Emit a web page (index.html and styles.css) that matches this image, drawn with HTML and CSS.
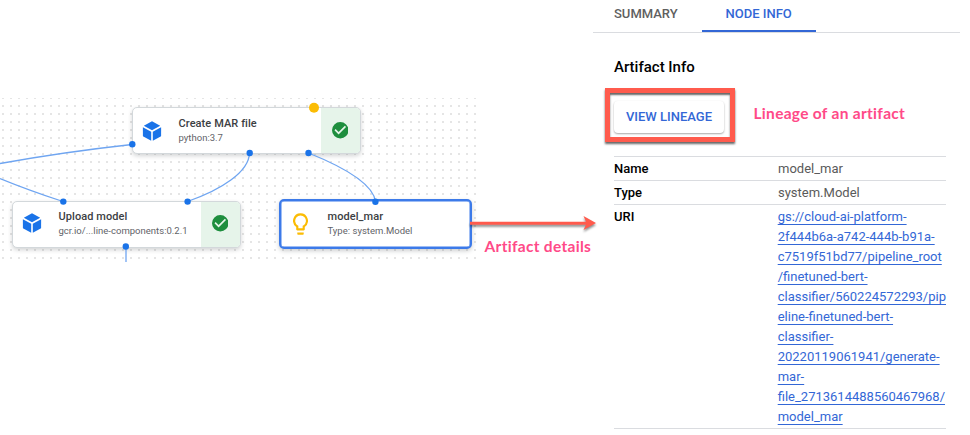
FILE: index.html
```html
<!DOCTYPE html>
<html lang="en">
<head>
<meta charset="utf-8">
<title>Pipeline artifact</title>
<link rel="stylesheet" href="styles.css">
</head>
<body>
<main class="stage">
  <div class="grid"></div>
  <section class="node create">
    <svg class="cube" viewBox="0 0 20 20"><path d="M10 .3 18.2 4.8 10 9.2 1.8 4.8Z"/><path d="M.9 6.2 9.2 10.7V19.8L.9 15.2Z"/><path d="M19.1 6.2 10.8 10.7V19.8L19.1 15.2Z"/></svg>
    <div class="label"><h3>Create MAR file</h3><p>python:3.7</p></div>
    <div class="status"><svg viewBox="2 2 20 20"><path d="M12 2a10 10 0 1 0 0 20 10 10 0 0 0 0-20Zm-2 15-5-5 1.4-1.4 3.6 3.6 7.6-7.6L19 8Z"/></svg></div>
  </section>
  <section class="node upload">
    <svg class="cube" viewBox="0 0 20 20"><path d="M10 .3 18.2 4.8 10 9.2 1.8 4.8Z"/><path d="M.9 6.2 9.2 10.7V19.8L.9 15.2Z"/><path d="M19.1 6.2 10.8 10.7V19.8L19.1 15.2Z"/></svg>
    <div class="label"><h3>Upload model</h3><p>gcr.io/...line-components:0.2.1</p></div>
    <div class="status"><svg viewBox="2 2 20 20"><path d="M12 2a10 10 0 1 0 0 20 10 10 0 0 0 0-20Zm-2 15-5-5 1.4-1.4 3.6 3.6 7.6-7.6L19 8Z"/></svg></div>
  </section>
  <section class="node model">
    <svg class="bulb" viewBox="5 2 14 20"><path d="M9 21c0 .5.4 1 1 1h4c.6 0 1-.5 1-1v-1H9v1Zm3-19a7 7 0 0 0-4 12.700V17c0 .5.4 1 1 1h6c.6 0 1-.5 1-1v-2.300A7 7 0 0 0 12 2Zm2.900 11.100-.9.600V16h-4v-2.300l-.8-.6A5 5 0 1 1 14.900 13.100Z"/></svg>
    <div class="label"><h3>model_mar</h3><p>Type: system.Model</p></div>
  </section>
  <svg class="links" viewBox="0 0 605 435">
    <g class="edges">
      <path d="M0 163.500Q64 152 132 144.500"/>
      <path d="M0 178.500Q28 190 63 201.500"/>
      <path d="M249.500 153C249 172 221 190 187.500 201.500"/>
      <path d="M308.500 153C346 168 373 184 375.500 201.500"/>
      <path d="M126 246.500V262"/>
    </g>
    <g class="ports">
      <circle cx="132.300" cy="144.300" r="3.200"/><circle cx="63.300" cy="201.600" r="3.200"/><circle cx="187.600" cy="201.600" r="3.200"/>
      <circle cx="249.700" cy="153" r="3.200"/><circle cx="308.500" cy="153" r="3.200"/><circle cx="375.400" cy="201.700" r="3.200"/><circle cx="125.800" cy="246.500" r="3.200"/>
    </g>
    <circle class="marker" cx="314" cy="107.800" r="5"/>
    <path class="arrow" d="M470 221.700H586L583.500 216 596 223 583.500 230 586 224.700H470Z"/>
  </svg>
  <p class="note details">Artifact details</p>
</main>
<aside class="panel">
  <nav class="tabs"><span class="tab">SUMMARY</span><span class="tab active">NODE INFO</span></nav>
  <div class="content">
    <h2>Artifact Info</h2>
    <div class="action"><div class="highlight"><button>VIEW LINEAGE</button></div><p class="note">Lineage of an artifact</p></div>
    <dl class="info">
      <div><dt>Name</dt><dd>model_mar</dd></div>
      <div><dt>Type</dt><dd>system.Model</dd></div>
      <div><dt>URI</dt><dd><a>gs://cloud-ai-platform-<br>2f444b6a-a742-444b-b91a-<br>c7519f51bd77/pipeline_root<br>/finetuned-bert-<br>classifier/560224572293/pip<br>eline-finetuned-bert-<br>classifier-<br>20220119061941/generate-<br>mar-<br>file_2713614488560467968/<br>model_mar</a></dd></div>
    </dl>
  </div>
</aside>
</body>
</html>
```
FILE: styles.css
```css
* { box-sizing: border-box; margin: 0; padding: 0; }
body { display: flex; width: 970px; height: 435px; overflow: hidden; background: #fff; font-family: Roboto, sans-serif; }
.stage { position: relative; width: 593px; flex: none; padding-top: 98px; }
.grid { width: 477px; height: 164px; background: linear-gradient(#e5e5e5, #e5e5e5); -webkit-mask: conic-gradient(from 270deg at 2px 2px, #000 90deg, transparent 0) 2px -1px / 8px 8px; mask: conic-gradient(from 270deg at 2px 2px, #000 90deg, transparent 0) 2px -1px / 8px 8px; }
.node { position: absolute; display: flex; align-items: center; height: 47px; border: 1px solid #d3d8db; border-radius: 5px; background: #fff; box-shadow: 0 2px 4px rgba(60, 64, 67, .22); overflow: hidden; }
.create { left: 131.500px; top: 107px; width: 229px; }
.upload { left: 11.500px; top: 200.500px; width: 229px; }
.model { left: 279px; top: 199px; width: 193px; height: 49.500px; border: 2px solid #3c7ae9; box-shadow: inset 0 0 0 .5px #3c7ae9, 0 2px 4px rgba(60, 64, 67, .25); }
.cube { width: 20px; height: 20px; margin-left: 9px; fill: #1a73e8; flex: none; }
.upload .cube { margin-bottom: 2px; }
.bulb { width: 15px; height: 22px; margin-left: 12px; fill: #fbbc04; flex: none; }
.label { margin-left: 17px; flex: 1; white-space: nowrap; }
.model .label { margin-left: 19.500px; }
.label h3 { color: #3c4043; font-size: 11px; line-height: 14px; font-weight: 500; letter-spacing: .08px; }
.label p { color: #5f6368; font-size: 9.500px; line-height: 13px; letter-spacing: .02px; }
.upload .label { padding-bottom: 1px; }
.status { align-self: stretch; width: 39px; display: flex; align-items: center; justify-content: center; background: #e6f4ea; }
.upload .status { padding-bottom: 1px; }
.status svg { width: 16.500px; height: 16.500px; fill: #1e8e3e; }
.links { position: absolute; left: 0; top: 0; width: 605px; height: 435px; z-index: 2; overflow: visible; }
.edges { fill: none; stroke: #6fa5f1; stroke-width: 1.300; }
.ports { fill: #1a73e8; }
.marker { fill: #fbbc04; }
.arrow { fill: #ff5b4d; filter: drop-shadow(0 2px 1px rgba(0, 0, 0, .45)); }
.note { color: #ff4a88; font: 700 15.500px/20px Lato, sans-serif; letter-spacing: .3px; white-space: nowrap; }
.details { position: absolute; left: 484.500px; top: 235.500px; }
.panel { width: 367px; }
.tabs { display: flex; height: 33px; border-bottom: 1px solid #dadce0; color: #5f5f5f; font-size: 13px; font-weight: 500; line-height: 27px; }
.tab { width: 109px; height: 32px; padding-left: 21px; }
.tab.active { width: 114px; padding-left: 23.500px; color: #3367d6; border-bottom: 2px solid #3367d6; }
.content { padding: 24px 14px 0 21px; }
h2 { font-size: 15px; line-height: 20px; font-weight: 500; color: #000; }
.action { display: flex; align-items: center; gap: 18.500px; margin: 11px 0 0 -9px; }
.highlight { width: 130px; height: 54px; border: 5px solid #ff5b4d; padding: 8px 4px; box-shadow: 0 2px 2px rgba(0, 0, 0, .6), inset 0 2px 2px rgba(0, 0, 0, .6); }
button { display: block; width: 110px; height: 32px; padding: 0; border: 0; border-radius: 4px; background: #fff; color: #3367d6; font: 500 13px/32px Roboto, sans-serif; box-shadow: 0 1px 2px rgba(0, 0, 0, .35); white-space: nowrap; }
.action .note { padding-bottom: 4px; }
.info { margin-top: 14px; border-bottom: 1px solid #dadce0; font-size: 13px; line-height: 20px; }
.info > div { display: flex; border-top: 1px solid #dadce0; padding: 2px 0 1px; }
dt { width: 164px; color: #000; font-weight: 500; }
dd { color: #5a5a5a; white-space: nowrap; }
a { color: #3367d6; text-decoration: underline; text-decoration-thickness: 1px; text-underline-offset: 3px; text-decoration-skip-ink: none; }
```
